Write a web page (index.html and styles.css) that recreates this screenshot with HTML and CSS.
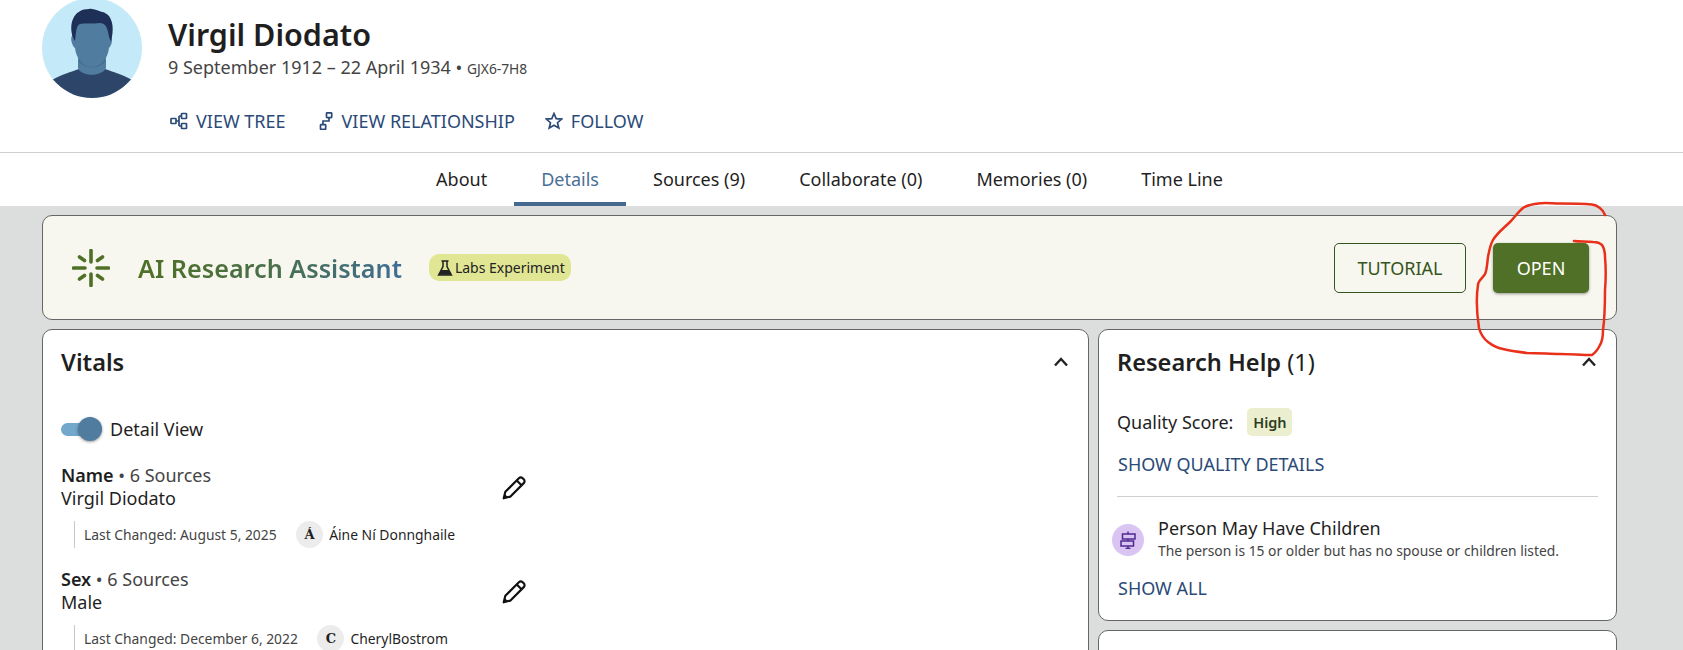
FILE: index.html
```html
<!DOCTYPE html>
<html lang="en">
<head>
<meta charset="utf-8">
<title>Virgil Diodato</title>
<link rel="stylesheet" href="styles.css">
</head>
<body>
<header class="person">
  <svg class="avatar" viewBox="0 0 100 100" aria-hidden="true">
    <defs><clipPath id="round"><circle cx="50" cy="50" r="50"/></clipPath></defs>
    <g clip-path="url(#round)">
      <rect width="100" height="100" fill="#c4e9f9"/>
      <path d="M10 82C20 76 29 74 37 71L63 71C71 74 80 76 90 82L90 100L10 100Z" fill="#2c4569"/>
      <path d="M36 58L36 70C39 79 60 79 64 70L64 58Z" fill="#507c9f"/>
      <path d="M37 64C43 71 57 71 63 64L63 58L37 58Z" fill="#436d90"/>
      <path d="M30 38C28 40 30 48 33 50C34 60 41 69 50 69C59 69 66 60 67 50C70 47 71 41 69 38L66 24L33 24Z" fill="#507c9f"/>
      <path d="M33 43C29 38 28 27 31 21C34 14 40 11 47 11C51 10 56 13 60 14C63 14 64 16 66 17C71 22 72 32 69 43C67 41 67 38 66 34C65 28 62 25 58 25C50 26 42 25 38 26C34 27 34 36 33 43Z" fill="#1e3058"/>
    </g>
  </svg>
  <div class="person-info">
    <h1 class="person-name">Virgil Diodato</h1>
    <p class="person-life">9 September 1912 – 22 April 1934 • <span class="person-id">GJX6-7H8</span></p>
    <nav class="person-actions">
      <a class="action">
        <svg class="action-icon" viewBox="0 0 18 18" aria-hidden="true"><rect x="1" y="6.5" width="5" height="5" rx="0.6"/><rect x="11.5" y="1.5" width="5" height="5" rx="0.6"/><rect x="11.5" y="11.5" width="5" height="5" rx="0.6"/><path d="M6 9H9M9 4V14M9 4H11.5M9 14H11.5"/></svg>
        VIEW TREE
      </a>
      <a class="action">
        <svg class="action-icon" viewBox="0 0 18 18" aria-hidden="true"><rect x="10.5" y="0.8" width="5.2" height="4.8" rx="0.6"/><rect x="4.5" y="12.6" width="5.2" height="4.8" rx="0.6"/><path d="M13 5.6V9H7V12.6"/></svg>
        VIEW RELATIONSHIP
      </a>
      <a class="action">
        <svg class="action-icon" viewBox="0 0 18 18" aria-hidden="true"><path d="M9 1.5L11.2 6.6L16.7 7.1L12.5 10.7L13.8 16.1L9 13.3L4.2 16.1L5.5 10.7L1.3 7.1L6.8 6.6Z"/></svg>
        FOLLOW
      </a>
    </nav>
  </div>
</header>

<nav class="tabs">
  <a class="tab">About</a>
  <a class="tab tab-active">Details</a>
  <a class="tab">Sources (9)</a>
  <a class="tab">Collaborate (0)</a>
  <a class="tab">Memories (0)</a>
  <a class="tab">Time Line</a>
</nav>

<main class="content">
  <section class="banner">
    <svg class="spark" viewBox="0 0 38 38" aria-hidden="true"><path d="M19 1.5V13M19 25V36.5M1.500 19H13M25 19H36.500M7.500 8L12.500 11.500M30.500 8L25.500 11.500M7.500 30L12.500 26.500M30.500 30L25.500 26.500"/></svg>
    <h2 class="banner-title">AI Research Assistant</h2>
    <span class="labs">
      <svg class="labs-icon" viewBox="0 0 16 16" aria-hidden="true"><path class="flask-fill" d="M4.4 10H11.6L14 14.8H2Z"/><path d="M4.5 1H11.5M6 1V6.5L1.6 15H14.4L10 6.5V1"/></svg>
      Labs Experiment
    </span>
    <a class="btn btn-outline">TUTORIAL</a>
    <a class="btn btn-solid">OPEN</a>
  </section>

  <div class="columns">
    <section class="card">
      <div class="card-head">
        <h2 class="card-title">Vitals</h2>
        <svg class="chevron" viewBox="0 0 16 10" aria-hidden="true"><path d="M2 8.5L8 2L14 8.5"/></svg>
      </div>
      <div class="toggle-row">
        <span class="toggle"><span class="toggle-knob"></span></span>
        Detail View
      </div>
      <div class="vital">
        <div class="vital-body">
          <p class="vital-label"><strong>Name</strong> • 6 Sources</p>
          <p class="vital-value">Virgil Diodato</p>
          <div class="changed">
            <span class="changed-date">Last Changed: August 5, 2025</span>
            <span class="initial">Á</span>
            <span class="changed-name">Áine Ní Donnghaile</span>
          </div>
        </div>
        <svg class="pencil" viewBox="0 0 24 24" aria-hidden="true"><path d="M2.5 21.5L4 15.5L16.5 3C17.5 2 19 2 20 3L21 4C22 5 22 6.5 21 7.5L8.5 20ZM14.5 5L19 9.5"/><path class="pencil-tip" d="M2.5 21.5L3.5 17.5L6.5 20.5Z"/></svg>
      </div>
      <div class="vital">
        <div class="vital-body">
          <p class="vital-label"><strong>Sex</strong> • 6 Sources</p>
          <p class="vital-value">Male</p>
          <div class="changed">
            <span class="changed-date">Last Changed: December 6, 2022</span>
            <span class="initial">C</span>
            <span class="changed-name">CherylBostrom</span>
          </div>
        </div>
        <svg class="pencil" viewBox="0 0 24 24" aria-hidden="true"><path d="M2.5 21.5L4 15.5L16.5 3C17.5 2 19 2 20 3L21 4C22 5 22 6.5 21 7.5L8.5 20ZM14.5 5L19 9.5"/><path class="pencil-tip" d="M2.5 21.5L3.5 17.5L6.5 20.5Z"/></svg>
      </div>
    </section>

    <aside class="side">
      <section class="card card-help">
        <div class="card-head">
          <h2 class="card-title">Research Help <span class="count">(1)</span></h2>
          <svg class="chevron" viewBox="0 0 16 10" aria-hidden="true"><path d="M2 8.5L8 2L14 8.5"/></svg>
        </div>
        <div class="quality">
          Quality Score:
          <span class="quality-badge">High</span>
        </div>
        <a class="link link-quality">SHOW QUALITY DETAILS</a>
        <hr class="divider">
        <div class="hint">
          <span class="hint-icon">
            <svg viewBox="0 0 18 18" aria-hidden="true"><path d="M9 0.5V3M9 8V10M9 15V17.5M6.5 17.5H11.5M3.5 3H16V8H3.5ZM2 10H14.5V15H2Z"/></svg>
          </span>
          <div>
            <p class="hint-title">Person May Have Children</p>
            <p class="hint-text">The person is 15 or older but has no spouse or children listed.</p>
          </div>
        </div>
        <a class="link">SHOW ALL</a>
      </section>
      <section class="card card-next"></section>
    </aside>
  </div>
</main>

<svg class="scribble" viewBox="0 0 1683 650" aria-hidden="true">
  <path d="M1605 215C1603 209 1597 205 1592 204.500C1580 203.500 1570 203.500 1560 203.500C1552 203.500 1545 202.500 1538 203.500C1532 204.500 1527 205 1523 208C1518 212 1514 218 1510 222C1504 228 1497 233 1493 240C1490 245 1489 252 1488 257C1487 264 1487 270 1485 274C1483 278 1478 280 1478 285C1476 298 1477 315 1479 328C1481 335 1484 339 1488 342C1493 346 1498 348 1503 349C1511 351 1519 352 1527 353C1540 353 1550 354 1560 354C1570 354 1582 355 1592 355C1595 353 1598 349 1600 345C1603 340 1603 335 1603 330C1605 316 1605 304 1605 290C1606 278 1606 268 1605 257C1605 252 1604 248 1602 245C1600 243 1596 242 1593 242C1586 241 1580 242 1574 241"/>
</svg>
</body>
</html>
```
FILE: styles.css
```css
* { box-sizing: border-box; }
html, body { margin: 0; height: 650px; overflow: hidden; }
body {
  position: relative;
  font-family: "Noto Sans", "Liberation Sans", sans-serif;
  color: #1f1f1f;
  background: #dcdede;
}
h1, h2, p { margin: 0; }

.person {
  display: flex;
  height: 153px;
  padding-left: 42px;
  background: #fff;
  border-bottom: 1px solid #cfcfcf;
}
.avatar { width: 100px; height: 100px; margin-top: -2px; flex: none; }
.person-info { margin-left: 26px; }
.person-name { margin-top: 14px; font-size: 30.5px; line-height: 40px; font-weight: 600; }
.person-life { font-size: 18px; line-height: 27px; color: #444; }
.person-id { font-size: 13.8px; }
.person-actions { display: flex; gap: 30px; margin: 25px 0 0 2px; }
.action { display: flex; align-items: center; gap: 8px; font-size: 18px; line-height: 28px; color: #2b4a78; white-space: nowrap; }
.action-icon { width: 18px; height: 18px; fill: none; stroke: #2b4a78; stroke-width: 1.7; }

.tabs {
  display: flex;
  justify-content: center;
  height: 53px;
  padding-right: 24px;
  background: #fff;
}
.tab { padding: 13px 27px 0; font-size: 18px; line-height: 27px; color: #1f1f1f; white-space: nowrap; }
.tab-active { color: #4a6f96; border-bottom: 4px solid #46698f; }

.content { padding: 9px 66px 0 42px; }
.banner {
  display: flex;
  align-items: center;
  height: 105px;
  padding: 0 27px 0 29px;
  background: #f7f7ef;
  border: 1px solid #666;
  border-radius: 10px;
}
.spark { width: 38px; height: 38px; fill: none; stroke: #4f7026; stroke-width: 3.6; stroke-linecap: round; flex: none; }
.banner-title {
  margin-left: 28px;
  font-size: 25.2px;
  line-height: 36px;
  font-weight: 600;
  background: linear-gradient(90deg, #4f7026 0%, #4a7048 50%, #3f6d95 100%);
  -webkit-background-clip: text;
  background-clip: text;
  color: transparent;
  white-space: nowrap;
}
.labs {
  display: flex;
  align-items: center;
  gap: 2px;
  height: 27px;
  margin-left: 27px;
  padding: 0 6px 0 8px;
  background: #e1e695;
  border-radius: 10px;
  font-size: 14px;
  color: #222;
  white-space: nowrap;
}
.labs-icon { width: 16px; height: 16px; fill: none; stroke: #222; stroke-width: 1.5; }
.flask-fill { fill: #222; stroke: none; }
.btn {
  display: flex;
  align-items: center;
  justify-content: center;
  height: 50px;
  border-radius: 5px;
  font-size: 18px;
}
.btn-outline { width: 132px; margin-left: auto; border: 1px solid #35541c; color: #35541c; }
.btn-solid { width: 96px; margin-left: 27px; background: #4f7026; color: #fff; box-shadow: 0 1px 3px rgba(0,0,0,.4); }

.columns { display: grid; grid-template-columns: 1047px 519px; gap: 9px; margin-top: 9px; }
.card { background: #fff; border: 1px solid #666; border-radius: 10px; }
.columns > .card { height: 400px; padding: 0 18px; }
.side { display: flex; flex-direction: column; gap: 9px; }
.card-help { height: 292px; padding: 0 18px; }
.card-next { height: 100px; }
.card-head { display: flex; align-items: center; justify-content: space-between; height: 64px; padding-right: 1px; }
.card-title { font-size: 23.6px; line-height: 32px; font-weight: 600; }
.count { font-weight: 400; }
.chevron { width: 16px; height: 10px; fill: none; stroke: #222; stroke-width: 2.4; }

.toggle-row { display: flex; align-items: center; gap: 8px; margin-top: 22px; font-size: 18px; line-height: 26px; }
.toggle { position: relative; width: 41px; height: 13px; border-radius: 7px; background: #71a8cb; flex: none; }
.toggle-knob { position: absolute; right: 0; top: -6px; width: 24px; height: 24px; border-radius: 50%; background: #507c9f; box-shadow: 0 1px 3px rgba(0,0,0,.4); }

.vital { display: flex; align-items: flex-start; width: 466px; margin-top: 22px; }
.vital + .vital { margin-top: 20px; }
.vital-body { flex: 1; }
.vital-label { font-size: 18px; line-height: 23px; color: #444; }
.vital-label strong { font-weight: 600; color: #1f1f1f; }
.vital-value { font-size: 18px; line-height: 22px; }
.changed { display: flex; align-items: center; height: 27px; margin: 12px 0 0 13px; padding-left: 9px; border-left: 1px solid #c8c8c8; white-space: nowrap; }
.changed-date { margin-right: 19.5px; font-size: 13.85px; color: #444; }
.initial { display: flex; align-items: center; justify-content: center; width: 27px; height: 27px; border-radius: 50%; background: #ececec; font-family: "DejaVu Serif", serif; font-weight: 700; font-size: 13px; flex: none; }
.changed-name { margin-left: 6px; font-size: 13.9px; }
.pencil { width: 26px; height: 26px; margin-top: 11px; fill: none; stroke: #111; stroke-width: 2; stroke-linejoin: round; flex: none; }
.pencil-tip { fill: #111; stroke: none; }

.quality { display: flex; align-items: center; height: 28px; margin-top: 14px; font-size: 18px; }
.quality-badge { display: flex; align-items: center; justify-content: center; width: 45px; height: 28px; margin-left: 14px; border-radius: 5px; background: #ecefcf; font-size: 14.5px; font-weight: 600; color: #2d3d1f; }
.link { display: block; margin-left: 1px; font-size: 18px; line-height: 26px; color: #2b4a78; }
.link-quality { margin-top: 15px; }
.divider { height: 1px; margin: 19px 0 0; border: 0; background: #cfcfcf; }
.hint { display: flex; align-items: center; gap: 14px; margin: 19px 0 0 -5px; }
.hint-icon { display: flex; align-items: center; justify-content: center; width: 32px; height: 32px; margin-top: 3px; border-radius: 50%; background: #d9c4f2; flex: none; }
.hint-icon svg { width: 18px; height: 18px; fill: none; stroke: #4f2a8f; stroke-width: 1.5; }
.hint-title { font-size: 18px; line-height: 25px; }
.hint-text { font-size: 13.85px; line-height: 20px; color: #444; }
.hint + .link { margin-top: 14px; }

.scribble { position: absolute; left: 0; top: 0; width: 1683px; height: 650px; pointer-events: none; fill: none; stroke: #e8301a; stroke-width: 2.5; stroke-linecap: round; }
```
